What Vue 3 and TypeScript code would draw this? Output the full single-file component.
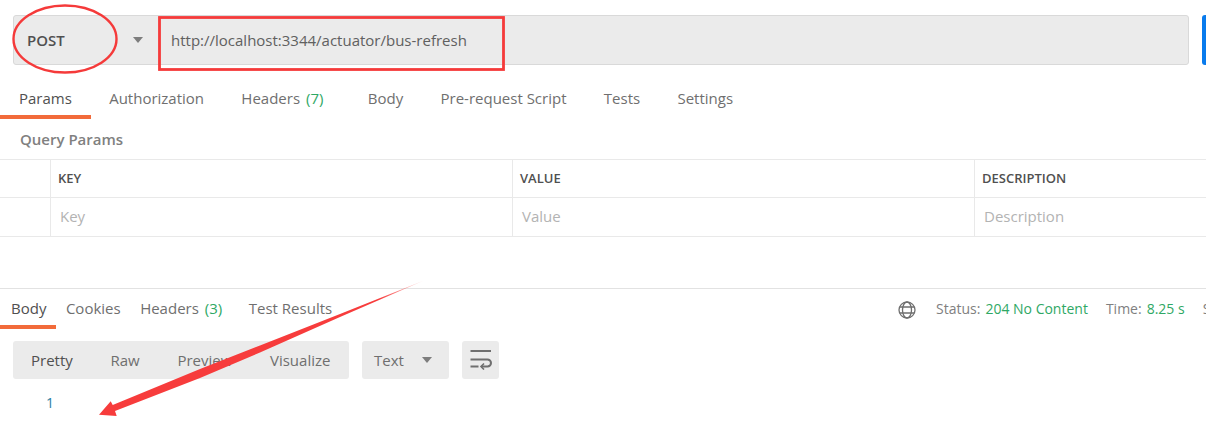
<script setup lang="ts">
const tabs = [
  { label: 'Params', active: true },
  { label: 'Authorization' },
  { label: 'Headers', count: '(7)', extra: true },
  { label: 'Body' },
  { label: 'Pre-request Script' },
  { label: 'Tests' },
  { label: 'Settings' },
]
const cols = [
  { head: 'KEY', ph: 'Key' },
  { head: 'VALUE', ph: 'Value' },
  { head: 'DESCRIPTION', ph: 'Description' },
]
</script>

<template>
  <div class="page">
    <div class="request">
      <div class="bar">
        <div class="method"><span>POST</span><i class="caret"></i></div>
        <div class="url">http://localhost:3344/actuator/bus-refresh</div>
      </div>
      <div class="send"></div>
    </div>

    <nav class="tabs">
      <span v-for="t in tabs" :key="t.label" class="tab" :class="{ active: t.active, extra: t.extra }">
        {{ t.label }}<em v-if="t.count">{{ t.count }}</em>
      </span>
    </nav>

    <div class="qp">Query Params</div>

    <div class="table">
      <div class="row head">
        <div class="check"></div>
        <div v-for="c in cols" :key="c.head" class="cell">{{ c.head }}</div>
      </div>
      <div class="row body">
        <div class="check"></div>
        <div v-for="c in cols" :key="c.ph" class="cell ph">{{ c.ph }}</div>
      </div>
    </div>

    <section class="response">
      <div class="resp-head">
        <nav class="rtabs">
          <span class="rtab active">Body</span>
          <span class="rtab">Cookies</span>
          <span class="rtab hdr">Headers<em>(3)</em></span>
          <span class="rtab">Test Results</span>
        </nav>
        <div class="status">
          <svg class="globe" width="18" height="18" viewBox="0 0 18 18" fill="none" stroke="#6f6f6f" stroke-width="1.3">
            <circle cx="9" cy="9" r="8" />
            <ellipse cx="9" cy="9" rx="4.500" ry="8" />
            <path d="M1.800 6h14.400M1.800 12h14.400" />
          </svg>
          <span class="lbl l1">Status:</span><span class="ok">204 No Content</span>
          <span class="lbl l2">Time:</span><span class="ok">8.25 s</span>
          <span class="lbl l3">Size</span>
        </div>
      </div>

      <div class="tools">
        <div class="seg">
          <span class="pretty">Pretty</span>
          <span>Raw</span>
          <span>Preview</span>
          <span>Visualize</span>
        </div>
        <div class="fmt"><span>Text</span><i class="caret"></i></div>
        <div class="wrap">
          <svg width="22" height="20" viewBox="0 0 22 20" fill="none" stroke="#6f6f6f" stroke-width="2">
            <path d="M0.500 1h20.500" />
            <path d="M0.500 9.500h17a3 3 0 0 1 0 7h-6" />
            <path d="M0.500 16.500h8" />
            <path d="M14 13.500l-3 3 3 3" stroke-width="1.600" />
          </svg>
        </div>
      </div>

      <div class="code"><span>1</span></div>
    </section>

    <svg class="marks" width="1206" height="443" viewBox="0 0 1206 443" fill="none">
      <ellipse cx="65" cy="39" rx="51.500" ry="33.500" stroke="#f53a3a" stroke-width="2.400" />
      <rect x="159.500" y="17.500" width="344" height="52" stroke="#f53a3a" stroke-width="2.800" />
      <defs>
        <linearGradient id="fade" gradientUnits="userSpaceOnUse" x1="100" y1="415" x2="425" y2="281">
          <stop offset="0.860" stop-color="#f73c3c" />
          <stop offset="1" stop-color="#f73c3c" stop-opacity="0.120" />
        </linearGradient>
      </defs>
      <path d="M424 280.500L340 314L260 345.500L200 369L112.700 405L110.700 401.300L99 414.700L116.700 416L115 411L200 378L260 352.500L340 317Z" fill="url(#fade)" />
    </svg>
  </div>
</template>

<style>
html, body { margin: 0; background: #fff; }
</style>

<style scoped>
.page {
  position: relative;
  width: 1206px;
  height: 443px;
  overflow: hidden;
  background: #fff;
  font-family: "Open Sans", "Liberation Sans", sans-serif;
  font-size: 15px;
  color: #6f6f6f;
}
.caret {
  display: block;
  width: 0;
  height: 0;
  border-left: 5px solid transparent;
  border-right: 5px solid transparent;
  border-top: 6px solid #7d7d7d;
}
.request {
  display: flex;
  gap: 13px;
  padding: 15px 0 0 13px;
  height: 50px;
}
.bar {
  display: flex;
  flex: none;
  width: 1176px;
  box-sizing: border-box;
  background: #ebebeb;
  border: 1px solid #d9d9d9;
  border-radius: 3px;
}
.method {
  width: 132px;
  box-sizing: border-box;
  padding: 0 3px 0 13px;
  display: flex;
  align-items: center;
  justify-content: space-between;
  font-weight: 600;
  color: #505050;
  flex: none;
}
.url {
  display: flex;
  align-items: center;
  padding-left: 25px;
  color: #606060;
}
.send {
  flex: none;
  width: 20px;
  background: #097bed;
  border-radius: 3px;
}
.tabs {
  display: flex;
  gap: 37.300px;
  margin-top: 21px;
  padding-left: 19px;
  height: 33px;
}
.tab {
  position: relative;
  line-height: 24px;
  white-space: nowrap;
}
.tab.extra { margin-right: 7px; }
.tab em, .rtab em { font-style: normal; color: #2fa865; margin-left: 6px; }
.tab.active { color: #505050; }
.tab.active::after {
  content: "";
  position: absolute;
  left: -19px;
  right: -19px;
  top: 29px;
  height: 4px;
  background: #f26b3a;
}
.qp {
  margin: 0 0 0 20px;
  height: 40px;
  padding-top: 10px;
  box-sizing: border-box;
  line-height: 20px;
  font-weight: 600;
  color: #808080;
}
.table {
  border-top: 1px solid #e9e9e9;
}
.row {
  display: grid;
  grid-template-columns: 51px 462px 462px 1fr;
  border-bottom: 1px solid #e9e9e9;
}
.row.head { height: 37px; }
.row.body { height: 38px; }
.check, .cell { border-right: 1px solid #e9e9e9; }
.cell:last-child { border-right: 0; }
.cell {
  display: flex;
  align-items: center;
  padding: 0 0 2px 7px;
  font-size: 13px;
  font-weight: 600;
  color: #505050;
  box-sizing: border-box;
}
.cell.ph {
  padding-left: 9px;
  font-size: 15px;
  font-weight: 400;
  color: #b3b3b3;
}
.response {
  margin-top: 51px;
  border-top: 1px solid #e2e2e2;
}
.resp-head {
  display: flex;
  justify-content: space-between;
  height: 39px;
}
.rtabs {
  display: flex;
  gap: 19.500px;
  padding-left: 11px;
}
.rtab {
  position: relative;
  line-height: 39px;
  white-space: nowrap;
}
.rtab.hdr { margin-right: 7px; }
.rtab.active { color: #505050; }
.rtab.active::after {
  content: "";
  position: absolute;
  left: -11px;
  right: -10px;
  top: 36px;
  height: 4px;
  background: #f26b3a;
}
.status {
  position: relative;
  display: flex;
  align-items: center;
  width: 308px;
  flex: none;
  white-space: nowrap;
  font-size: 14px;
  color: #808080;
  overflow: hidden;
}
.globe { flex: none; margin-right: 20px; margin-top: 2px; }
.lbl { flex: none; }
.l1 { margin-right: 5px; }
.l2 { margin-left: 18px; margin-right: 5px; }
.l3 { margin-left: 18px; }
.ok { flex: none; color: #2fa865; }
.tools {
  display: flex;
  margin: 13px 0 0 13px;
  height: 38px;
}
.seg, .fmt, .wrap {
  background: #ebebeb;
  border-radius: 3px;
  display: flex;
  align-items: center;
  flex: none;
}
.seg {
  width: 336px;
  box-sizing: border-box;
  padding-left: 18px;
  gap: 37.700px;
}
.seg .pretty { color: #505050; }
.fmt {
  width: 87px;
  margin-left: 13px;
  box-sizing: border-box;
  padding: 0 17px 0 12px;
  justify-content: space-between;
}
.wrap {
  width: 37px;
  margin-left: 13px;
  justify-content: center;
}
.code {
  margin-top: 14px;
  padding-left: 46px;
  line-height: 20px;
  color: #2a7ea3;
  font-size: 14px;
}
.marks {
  position: absolute;
  left: 0;
  top: 0;
  pointer-events: none;
}
</style>
